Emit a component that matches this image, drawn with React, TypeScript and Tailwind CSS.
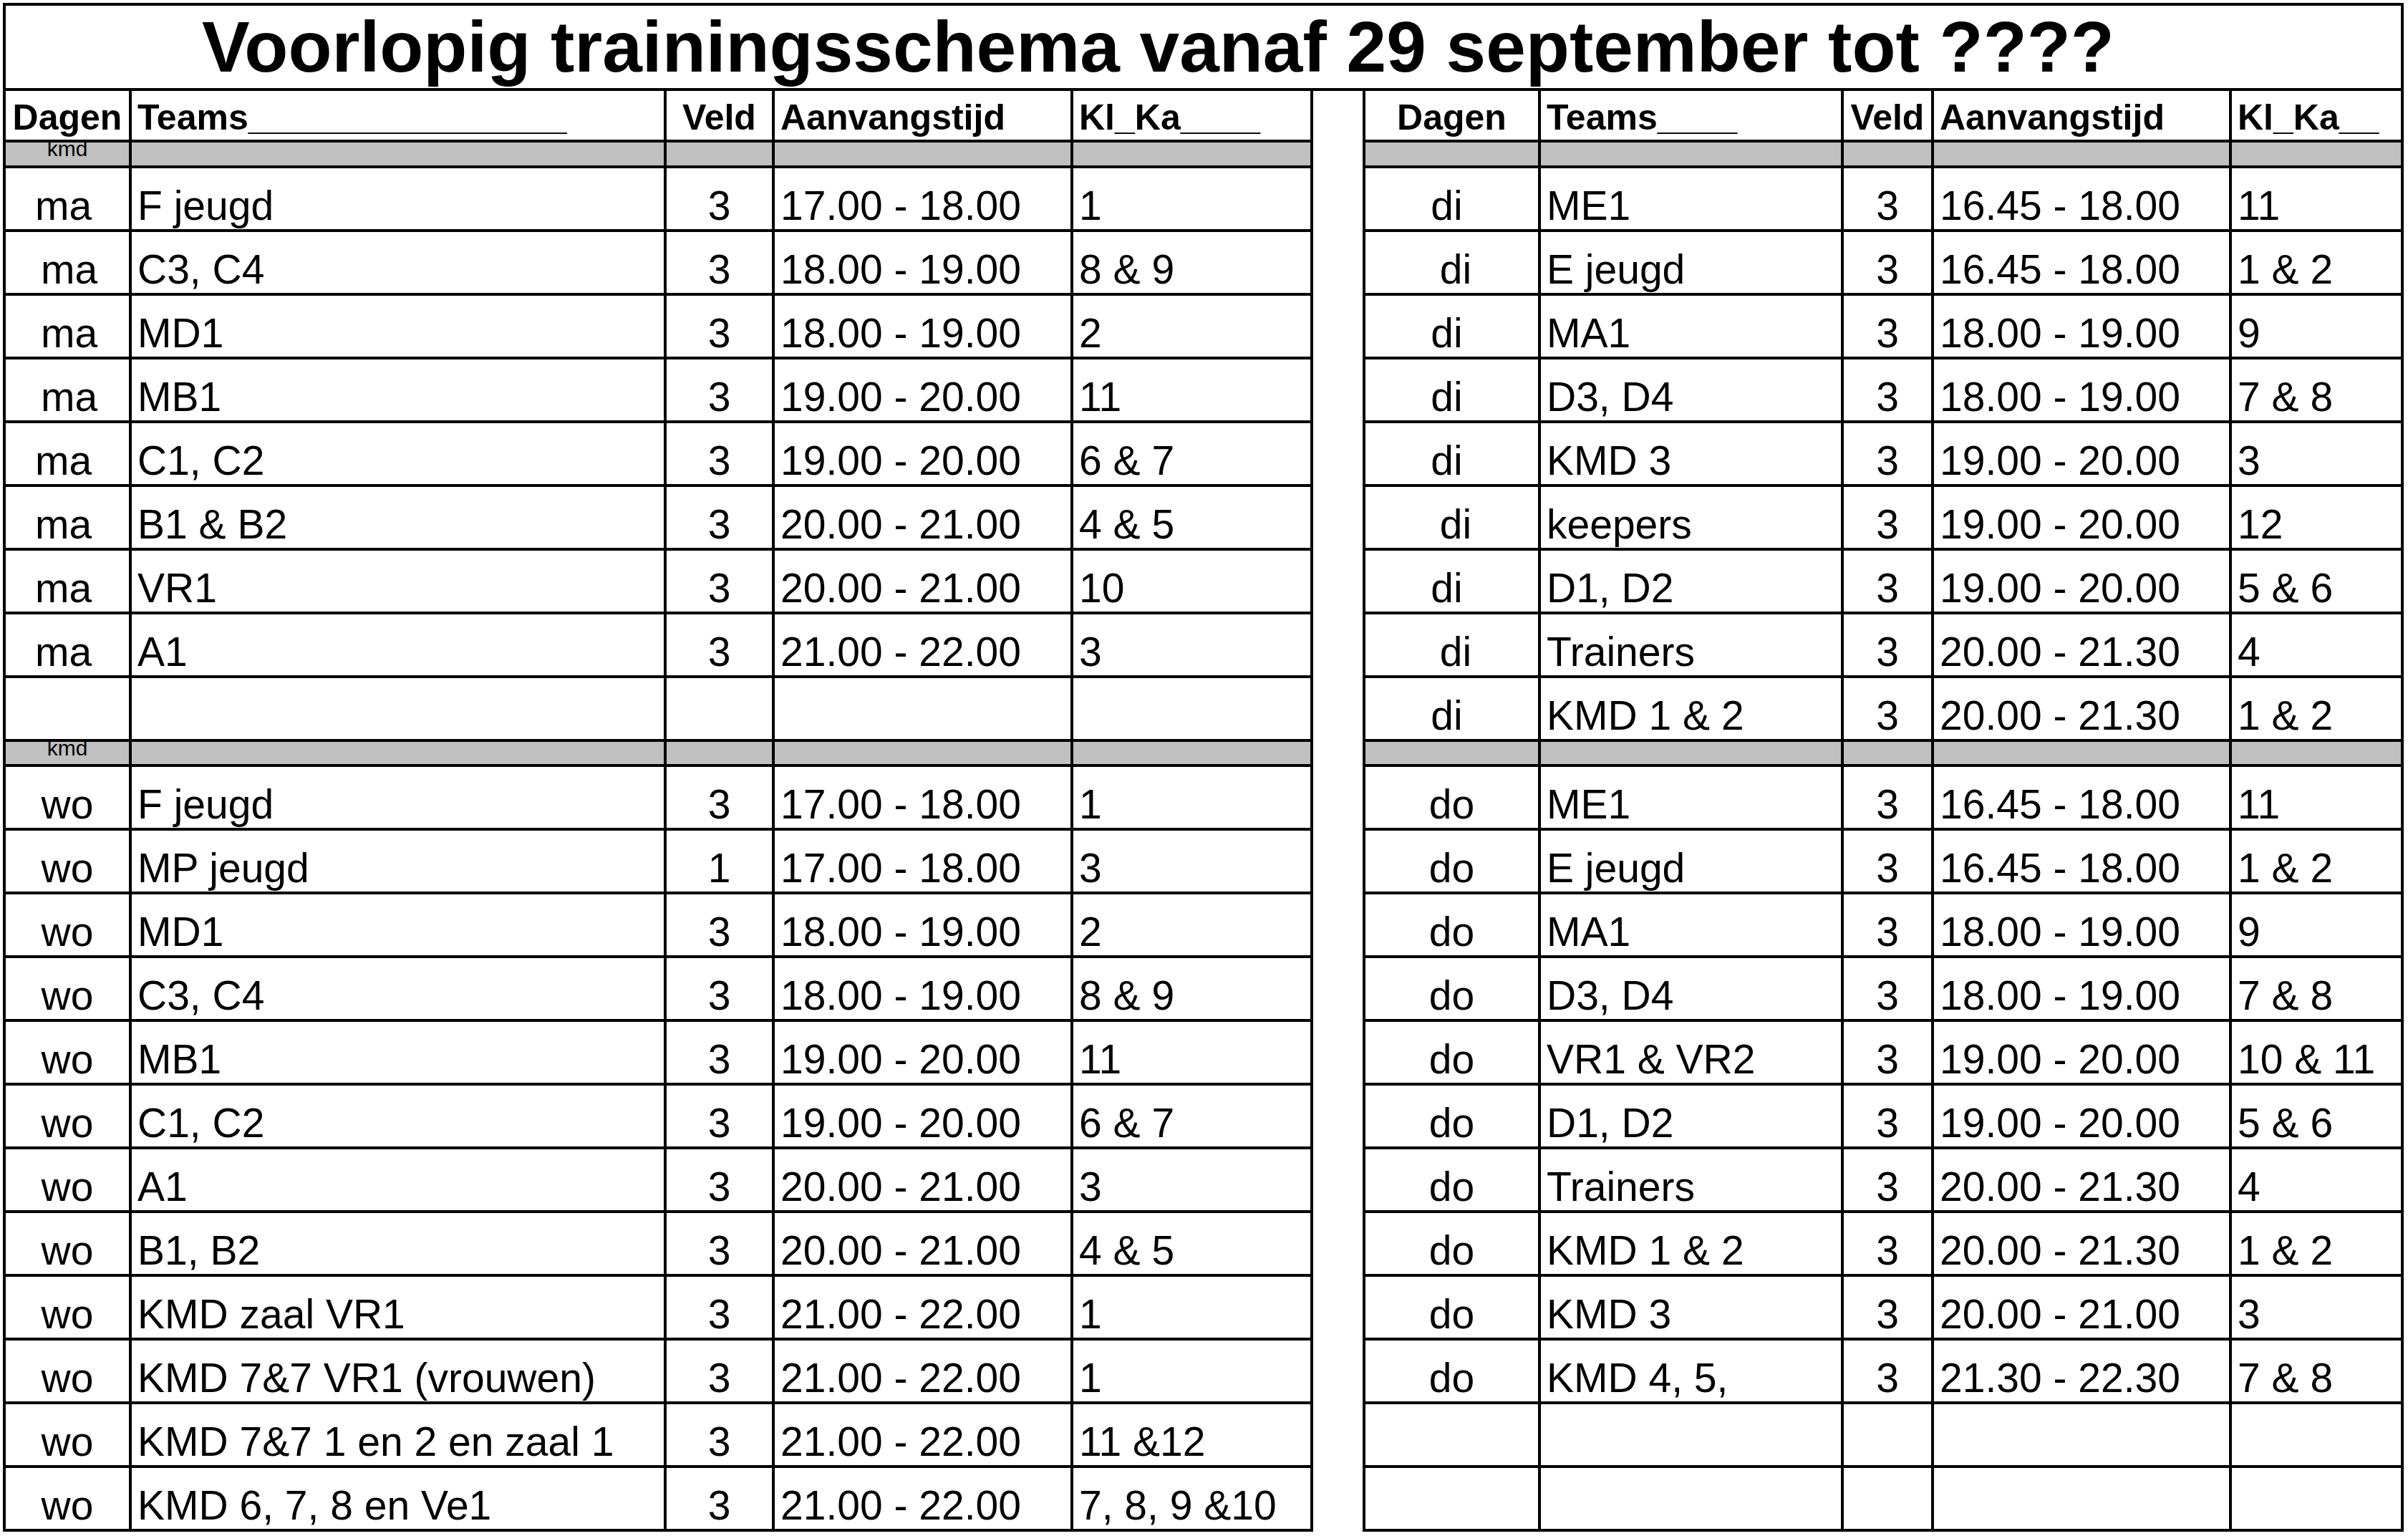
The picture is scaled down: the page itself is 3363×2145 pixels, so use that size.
type Row = [string, string, string, string, string, number?];

const leftCols = ["w-[176px]", "w-[747px]", "w-[151px]", "w-[417px]", "w-[335px]"];
const rightCols = ["w-[245px]", "w-[423px]", "w-[126px]", "w-[416px]", "w-[240px]"];

// shift: 0 = centred, 1 = "ma " style (a bit left), 2 = " ma" style (a bit right)
const dayShift: Record<string, string[]> = {
  ma: ["", "pr-[11px]", "pl-[5px]"],
  di: ["", "pr-[14px]", "pl-[11px]"],
  wo: ["", "", ""],
  do: ["", "", ""],
};

const maRows: Row[] = [
  ["ma", "F jeugd", "3", "17.00 - 18.00", "1", 1],
  ["ma", "C3, C4", "3", "18.00 - 19.00", "8 & 9", 2],
  ["ma", "MD1", "3", "18.00 - 19.00", "2", 2],
  ["ma", "MB1", "3", "19.00 - 20.00", "11", 2],
  ["ma", "C1, C2", "3", "19.00 - 20.00", "6 & 7", 1],
  ["ma", "B1 & B2", "3", "20.00 - 21.00", "4 & 5", 1],
  ["ma", "VR1", "3", "20.00 - 21.00", "10", 1],
  ["ma", "A1", "3", "21.00 - 22.00", "3", 1],
  ["", "", "", "", ""],
];

const woRows: Row[] = [
  ["wo", "F jeugd", "3", "17.00 - 18.00", "1"],
  ["wo", "MP jeugd", "1", "17.00 - 18.00", "3"],
  ["wo", "MD1", "3", "18.00 - 19.00", "2"],
  ["wo", "C3, C4", "3", "18.00 - 19.00", "8 & 9"],
  ["wo", "MB1", "3", "19.00 - 20.00", "11"],
  ["wo", "C1, C2", "3", "19.00 - 20.00", "6 & 7"],
  ["wo", "A1", "3", "20.00 - 21.00", "3"],
  ["wo", "B1, B2", "3", "20.00 - 21.00", "4 & 5"],
  ["wo", "KMD zaal VR1", "3", "21.00 - 22.00", "1"],
  ["wo", "KMD 7&7 VR1 (vrouwen)", "3", "21.00 - 22.00", "1"],
  ["wo", "KMD 7&7 1 en 2 en zaal 1", "3", "21.00 - 22.00", "11 &12"],
  ["wo", "KMD 6, 7, 8 en Ve1", "3", "21.00 - 22.00", "7, 8, 9 &10"],
];

const diRows: Row[] = [
  ["di", "ME1", "3", "16.45 - 18.00", "11", 1],
  ["di", "E jeugd", "3", "16.45 - 18.00", "1 & 2", 2],
  ["di", "MA1", "3", "18.00 - 19.00", "9", 1],
  ["di", "D3, D4", "3", "18.00 - 19.00", "7 & 8", 1],
  ["di", "KMD 3", "3", "19.00 - 20.00", "3", 1],
  ["di", "keepers", "3", "19.00 - 20.00", "12", 2],
  ["di", "D1, D2", "3", "19.00 - 20.00", "5 & 6", 1],
  ["di", "Trainers", "3", "20.00 - 21.30", "4", 2],
  ["di", "KMD 1 & 2", "3", "20.00 - 21.30", "1 & 2", 1],
];

const doRows: Row[] = [
  ["do", "ME1", "3", "16.45 - 18.00", "11"],
  ["do", "E jeugd", "3", "16.45 - 18.00", "1 & 2"],
  ["do", "MA1", "3", "18.00 - 19.00", "9"],
  ["do", "D3, D4", "3", "18.00 - 19.00", "7 & 8"],
  ["do", "VR1 & VR2", "3", "19.00 - 20.00", "10 & 11"],
  ["do", "D1, D2", "3", "19.00 - 20.00", "5 & 6"],
  ["do", "Trainers", "3", "20.00 - 21.30", "4"],
  ["do", "KMD 1 & 2", "3", "20.00 - 21.30", "1 & 2"],
  ["do", "KMD 3", "3", "20.00 - 21.00", "3"],
  ["do", "KMD 4, 5,", "3", "21.30 - 22.30", "7 & 8"],
  ["", "", "", "", ""],
  ["", "", "", "", ""],
];

const cell = "flex shrink-0 h-full border-r-4 border-black whitespace-nowrap";

function HeaderRow({ cols, teams, klka }: { cols: string[]; teams: string; klka: string }) {
  const labels = ["Dagen", teams, "Veld", "Aanvangstijd", klka];
  return (
    <div className="flex h-[72px] border-b-4 border-black text-[50px] font-bold leading-none">
      {labels.map((l, i) => (
        <div
          key={i}
          className={`${cell} ${cols[i]} items-end pb-[6px] ${i === 0 || i === 2 ? "justify-center" : "pl-[8px]"}`}
        >
          {l}
        </div>
      ))}
    </div>
  );
}

function GrayRow({ cols, kmd, tall }: { cols: string[]; kmd?: boolean; tall?: boolean }) {
  return (
    <div className={`flex border-b-4 border-black bg-[#c0c0c0] ${tall ? "h-[36px]" : "h-[35px]"}`}>
      {cols.map((c, i) => (
        <div key={i} className={`${cell} ${c} justify-center items-start`}>
          {i === 0 && kmd ? <span className="-mt-[6px] text-[30px] leading-none">kmd</span> : null}
        </div>
      ))}
    </div>
  );
}

function DataRow({ cols, row }: { cols: string[]; row: Row }) {
  const [day, team, veld, tijd, kl, shift] = row;
  const dayPad = day ? dayShift[day][shift ?? 0] : "";
  return (
    <div className="flex h-[89px] border-b-4 border-black text-[57px] leading-none">
      <div className={`${cell} ${cols[0]} items-end justify-center pb-[4px] ${dayPad}`}>{day}</div>
      <div className={`${cell} ${cols[1]} items-end pb-[4px] pl-[8px]`}>{team}</div>
      <div className={`${cell} ${cols[2]} items-end justify-center pb-[4px]`}>{veld}</div>
      <div className={`${cell} ${cols[3]} items-end pb-[4px] pl-[8px]`}>{tijd}</div>
      <div className={`${cell} ${cols[4]} items-end pb-[4px] pl-[8px]`}>{kl}</div>
    </div>
  );
}

export default function App() {
  return (
    <div className="w-[3363px] bg-white px-[4px] pt-[4px] text-black font-['Liberation_Sans',Arial,sans-serif]">
      {/* Title */}
      <div className="flex h-[123px] w-[3353px] items-end justify-center border-4 border-black pb-[8px] pr-[126px] text-[100px] font-bold leading-none whitespace-nowrap">
        Voorlopig trainingsschema vanaf 29 september tot ????
      </div>

      <div className="flex gap-[69px]">
        {/* Left: maandag / woensdag */}
        <div className="flex flex-col border-l-4 border-black">
          <HeaderRow cols={leftCols} teams="Teams________________" klka="Kl_Ka____" />
          <GrayRow cols={leftCols} kmd tall />
          {maRows.map((r, i) => (
            <DataRow key={i} cols={leftCols} row={r} />
          ))}
          <GrayRow cols={leftCols} kmd />
          {woRows.map((r, i) => (
            <DataRow key={i} cols={leftCols} row={r} />
          ))}
        </div>

        {/* Right: dinsdag / donderdag */}
        <div className="flex flex-col border-l-4 border-black">
          <HeaderRow cols={rightCols} teams="Teams____" klka="Kl_Ka__" />
          <GrayRow cols={rightCols} tall />
          {diRows.map((r, i) => (
            <DataRow key={i} cols={rightCols} row={r} />
          ))}
          <GrayRow cols={rightCols} />
          {doRows.map((r, i) => (
            <DataRow key={i} cols={rightCols} row={r} />
          ))}
        </div>
      </div>
    </div>
  );
}
